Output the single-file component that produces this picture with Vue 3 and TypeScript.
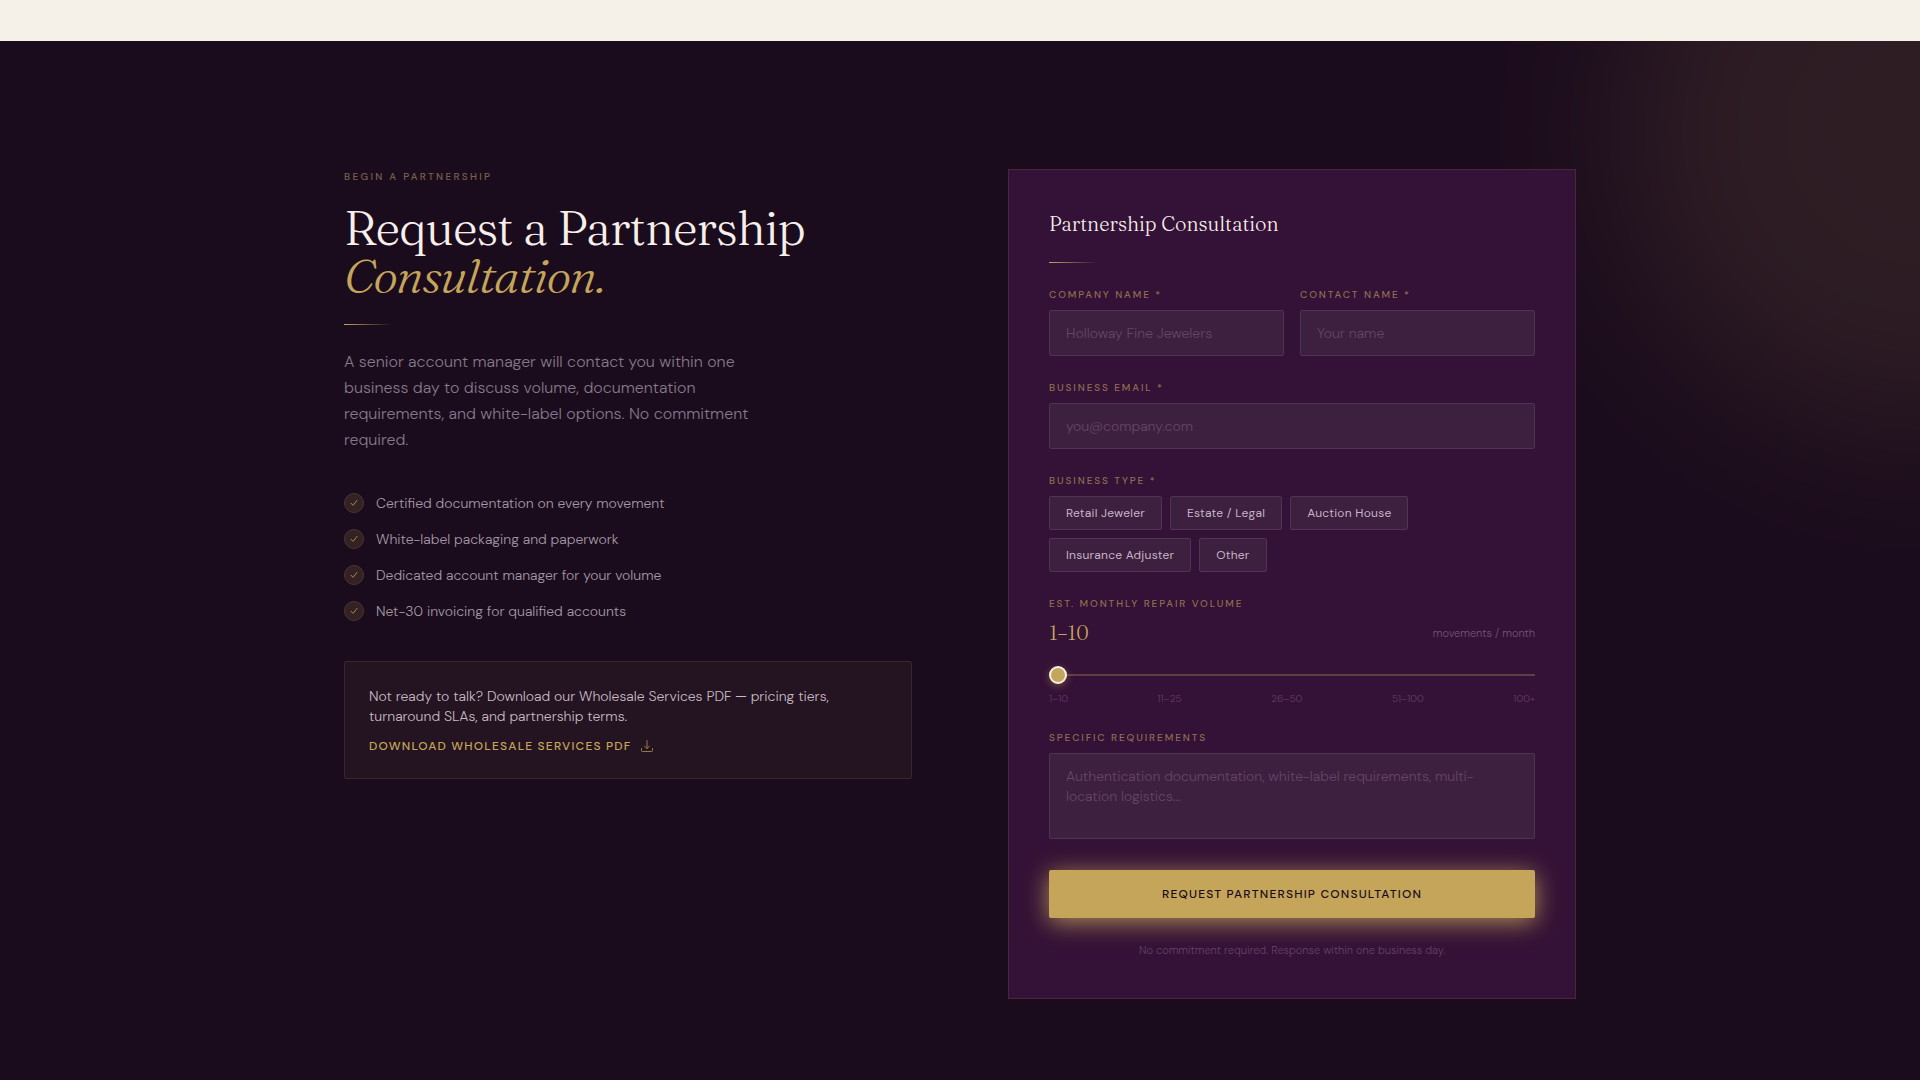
<script setup lang="ts">
import { computed, ref } from 'vue'

const benefits: string[] = [
  'Certified documentation on every movement',
  'White-label packaging and paperwork',
  'Dedicated account manager for your volume',
  'Net-30 invoicing for qualified accounts',
]

const businessTypes: string[] = [
  'Retail Jeweler',
  'Estate / Legal',
  'Auction House',
  'Insurance Adjuster',
  'Other',
]

const volumes: string[] = ['1–10', '11–25', '26–50', '51–100', '100+']

const company = ref('')
const contact = ref('')
const email = ref('')
const requirements = ref('')
const businessType = ref('')
const volumeIndex = ref(0)
const volume = computed(() => volumes[volumeIndex.value])
</script>

<template>
  <div class="page">
    <div class="previous-section"></div>
    <section class="consultation">
      <div class="container">
        <div class="intro">
          <p class="eyebrow">Begin a Partnership</p>
          <h2>Request a Partnership <em>Consultation.</em></h2>
          <div class="rule"></div>
          <p class="lead">
            A senior account manager will contact you within one business day to discuss volume,
            documentation requirements, and white-label options. No commitment required.
          </p>
          <ul class="benefits">
            <li v-for="benefit in benefits" :key="benefit">
              <span class="check">
                <svg viewBox="0 0 10 10" width="10" height="10" aria-hidden="true">
                  <path d="M2 5.3 4.1 7.4 8 2.4" />
                </svg>
              </span>
              {{ benefit }}
            </li>
          </ul>
          <div class="download">
            <p>
              Not ready to talk? Download our Wholesale Services PDF — pricing tiers, turnaround
              SLAs, and partnership terms.
            </p>
            <a href="#wholesale-pdf">
              Download Wholesale Services PDF
              <svg viewBox="0 0 14 14" width="14" height="14" aria-hidden="true">
                <path d="M7 1.5v8M4.5 7 7 9.5 9.5 7M1.5 9.5v2.2q0 .8.8.8h9.4q.8 0 .8-.8V9.5" />
              </svg>
            </a>
          </div>
        </div>

        <form class="card" @submit.prevent>
          <h3>Partnership Consultation</h3>
          <div class="rule"></div>

          <div class="fields">
            <div class="pair">
              <div class="field">
                <label for="company">Company Name *</label>
                <input id="company" v-model="company" type="text" placeholder="Holloway Fine Jewelers" />
              </div>
              <div class="field">
                <label for="contact">Contact Name *</label>
                <input id="contact" v-model="contact" type="text" placeholder="Your name" />
              </div>
            </div>

            <div class="field">
              <label for="email">Business Email *</label>
              <input id="email" v-model="email" type="email" placeholder="you@company.com" />
            </div>

            <div class="field" role="group" aria-labelledby="type-label">
              <span id="type-label" class="label">Business Type *</span>
              <div class="chips">
                <button
                  v-for="type in businessTypes"
                  :key="type"
                  type="button"
                  :class="{ selected: businessType === type }"
                  :aria-pressed="businessType === type"
                  @click="businessType = type"
                >
                  {{ type }}
                </button>
              </div>
            </div>

            <div class="field">
              <label for="volume">Est. Monthly Repair Volume</label>
              <div class="volume-row">
                <output for="volume">{{ volume }}</output>
                <span>movements / month</span>
              </div>
              <input id="volume" v-model.number="volumeIndex" class="slider" type="range" min="0" max="4" step="1" />
              <div class="ticks">
                <span v-for="tick in volumes" :key="tick">{{ tick }}</span>
              </div>
            </div>

            <div class="field">
              <label for="requirements">Specific Requirements</label>
              <textarea
                id="requirements"
                v-model="requirements"
                placeholder="Authentication documentation, white-label requirements, multi-location logistics..."
              ></textarea>
            </div>
          </div>

          <button class="submit" type="submit">Request Partnership Consultation</button>
          <p class="note">No commitment required. Response within one business day.</p>
        </form>
      </div>
    </section>
  </div>
</template>

<style>
body {
  margin: 0;
  background: #1b0c1d;
}
</style>

<style scoped>
* {
  box-sizing: border-box;
}

.page {
  --gold: #c5a55a;
  --cream: #f7efea;
  --serif: 'Fraunces', 'Liberation Serif', serif;
  --sans: 'DM Sans', 'Lato', sans-serif;
  display: flex;
  flex-direction: column;
  min-height: 100vh;
  background: #1b0c1d;
  font-family: var(--sans);
  font-weight: 300;
}

.previous-section {
  height: 41px;
  background: #f5f0e8;
}

.consultation {
  position: relative;
  flex: 1;
  padding: 128px 0 80px;
  overflow: hidden;
}

.consultation::before {
  content: '';
  position: absolute;
  top: -210px;
  right: -300px;
  width: 600px;
  height: 600px;
  border-radius: 50%;
  background: var(--gold);
  opacity: 0.11;
  filter: blur(80px);
}

.container {
  position: relative;
  display: grid;
  grid-template-columns: 1fr 1fr;
  gap: 96px;
  align-items: start;
  max-width: 1280px;
  margin: 0 auto;
  padding: 0 24px;
}

h2,
h3,
p,
ul {
  margin: 0;
  padding: 0;
}

.eyebrow {
  margin-bottom: 20px;
  color: #7a614a;
  font-size: 10px;
  font-weight: 500;
  line-height: 15px;
  letter-spacing: 0.23em;
  text-transform: uppercase;
}

h2 {
  color: var(--cream);
  font-family: var(--serif);
  font-size: 48px;
  font-weight: 300;
  line-height: 48px;
  letter-spacing: -0.02em;
}

h2 em {
  display: block;
  color: var(--gold);
}

.rule {
  width: 48px;
  height: 1px;
  margin: 24px 0;
  background: linear-gradient(90deg, var(--gold), transparent);
}

.lead {
  max-width: 440px;
  color: #85788a;
  font-size: 16px;
  line-height: 26px;
}

.benefits {
  display: flex;
  flex-direction: column;
  gap: 16px;
  margin: 40px 0;
  list-style: none;
}

.benefits li {
  display: flex;
  align-items: center;
  gap: 12px;
  color: #a598a6;
  font-size: 14px;
  line-height: 20px;
}

.check {
  display: flex;
  align-items: center;
  justify-content: center;
  width: 20px;
  height: 20px;
  border: 1px solid #4a3533;
  border-radius: 50%;
  background: #332124;
}

svg {
  fill: none;
  stroke: currentColor;
  stroke-linecap: round;
  stroke-linejoin: round;
}

.check svg {
  color: #a3874f;
}

.download {
  padding: 24px;
  border: 1px solid #3a2729;
  border-radius: 2px;
  background: #241320;
}

.download p {
  margin-bottom: 12px;
  color: #c6bac4;
  font-size: 14px;
  line-height: 20px;
}

.download a {
  display: flex;
  align-items: center;
  gap: 8px;
  color: var(--gold);
  font-size: 12px;
  font-weight: 500;
  line-height: 16px;
  letter-spacing: 0.1em;
  text-decoration: none;
  text-transform: uppercase;
}

.download svg {
  opacity: 0.7;
}

.card {
  padding: 40px;
  border: 1px solid #49283f;
  background: #341136;
}

h3 {
  color: var(--cream);
  font-family: var(--serif);
  font-size: 20px;
  font-weight: 300;
  line-height: 28px;
}

.fields {
  display: flex;
  flex-direction: column;
  gap: 24px;
}

.pair {
  display: grid;
  grid-template-columns: 1fr 1fr;
  gap: 16px;
}

.field {
  display: flex;
  flex-direction: column;
  min-width: 0;
}

label,
.label {
  margin-bottom: 8px;
  color: #8e6e50;
  font-size: 10px;
  font-weight: 500;
  line-height: 15px;
  letter-spacing: 0.19em;
  text-transform: uppercase;
}

input[type='text'],
input[type='email'],
textarea {
  width: 100%;
  margin: 0;
  padding: 12px 16px;
  border: 1px solid #513353;
  border-radius: 2px;
  outline: none;
  background: #3d1f3f;
  color: var(--cream);
  font-family: inherit;
  font-size: 14px;
  font-weight: 300;
  line-height: 20px;
}

input[type='text'],
input[type='email'] {
  height: 46px;
}

textarea {
  display: block;
  height: 86px;
  resize: none;
}

::placeholder {
  color: #664568;
  opacity: 1;
}

.chips {
  display: flex;
  flex-wrap: wrap;
  gap: 8px;
  max-width: 400px;
}

.chips button {
  padding: 8px 16px;
  border: 1px solid #513353;
  border-radius: 2px;
  background: #3d1f3f;
  color: #c6b5c6;
  font-family: inherit;
  font-size: 12px;
  font-weight: 400;
  line-height: 16px;
  letter-spacing: 0.02em;
  cursor: pointer;
}

.chips button.selected {
  border-color: var(--gold);
  color: var(--gold);
}

.volume-row {
  display: flex;
  align-items: center;
  justify-content: space-between;
  line-height: 28px;
}

.volume-row output {
  color: var(--gold);
  font-family: var(--serif);
  font-size: 20px;
}

.volume-row span {
  color: #75527a;
  font-size: 11px;
}

.slider {
  width: 100%;
  height: 18px;
  margin: 19px 0 8px;
  appearance: none;
  background: linear-gradient(#613e41, #613e41) center / 100% 2px no-repeat;
}

.slider::-webkit-slider-thumb {
  width: 18px;
  height: 18px;
  border: 2px solid var(--cream);
  border-radius: 50%;
  appearance: none;
  background: var(--gold);
  box-shadow: 0 2px 8px rgba(197, 165, 90, 0.4);
}

.ticks {
  display: flex;
  justify-content: space-between;
  color: #643f67;
  font-size: 10px;
  line-height: 14px;
}

.submit {
  display: block;
  width: 100%;
  height: 48px;
  margin: 31px 0 25px;
  border: 0;
  border-radius: 2px;
  background: var(--gold);
  box-shadow: 0 4px 24px rgba(197, 165, 90, 0.85);
  color: #1b0c1d;
  font-family: inherit;
  font-size: 12px;
  font-weight: 500;
  letter-spacing: 0.1em;
  text-transform: uppercase;
  cursor: pointer;
}

.note {
  color: #64426a;
  font-size: 11px;
  line-height: 15px;
  text-align: center;
}

@media (max-width: 900px) {
  .container {
    grid-template-columns: 1fr;
  }
}
</style>
